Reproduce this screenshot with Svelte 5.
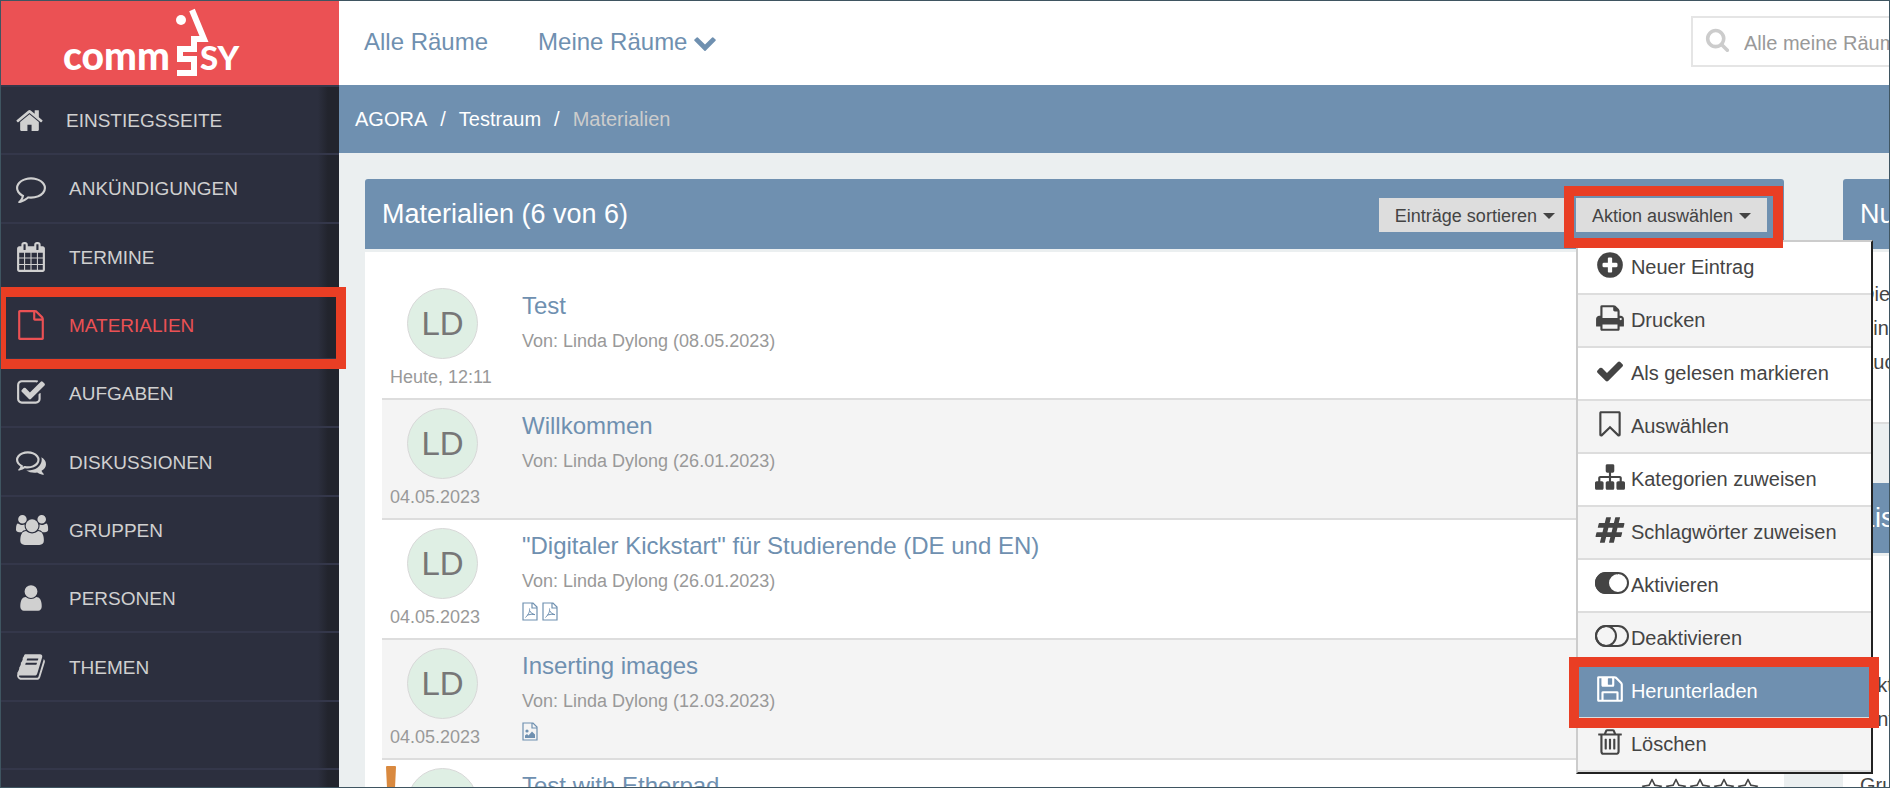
<script>
  const paths = {
    home: 'M1472 992v480q0 26-19 45t-45 19h-384v-384h-256v384h-384q-26 0-45-19t-19-45v-480q0-1 .5-3t.5-3l575-474 575 474q1 2 1 6zm223-69l-62 74q-8 9-21 11h-3q-13 0-21-7l-692-577-692 577q-12 8-24 7-13-2-21-11l-62-74q-8-10-7-23.5t11-21.5l719-599q32-26 76-26t76 26l244 204v-195q0-14 9-23t23-9h192q14 0 23 9t9 23v408l219 182q10 8 11 21.5t-7 23.5z',
    comment: 'M896 384q-204 0-381.5 69.5t-282 187.5-104.5 255q0 112 71.5 213.5t201.5 175.5l87 50-27 96q-24 91-70 172 152-63 275-171l43-38 57 6q69 8 130 8 204 0 381.5-69.5t282-187.5 104.5-255-104.5-255-282-187.5-381.5-69.5zm896 512q0 174-120 321.5t-326 233-450 85.5q-70 0-145-8-198 175-460 242-49 14-114 22h-5q-15 0-27-10.5t-16-27.5v-1q-3-4-.5-12t2-10 4.5-9.5l6-9 7-8.5 8-9q7-8 31-34.5t34.5-38 31-39.5 32.5-51 27-59 26-76q-157-89-247.5-220t-90.5-281q0-130 71-248.5t191-204.5 286-136.5 348-50.5 348 50.5 286 136.5 191 204.5 71 248.5z',
    calendar: 'M192 1664h288v-288h-288v288zm352 0h320v-288h-320v288zm-352-352h288v-320h-288v320zm352 0h320v-320h-320v320zm-352-384h288v-288h-288v288zm736 736h320v-288h-320v288zm-384-736h320v-288h-320v288zm768 736h288v-288h-288v288zm-384-352h320v-320h-320v320zm-352-864v-288q0-13-9.5-22.5t-22.5-9.5h-64q-13 0-22.5 9.5t-9.5 22.5v288q0 13 9.5 22.5t22.5 9.5h64q13 0 22.5-9.5t9.5-22.5zm736 864h288v-320h-288v320zm-384-384h320v-288h-320v288zm384 0h288v-288h-288v288zm32-480v-288q0-13-9.5-22.5t-22.5-9.5h-64q-13 0-22.5 9.5t-9.5 22.5v288q0 13 9.5 22.5t22.5 9.5h64q13 0 22.5-9.5t9.5-22.5zm384-64v1280q0 52-38 90t-90 38h-1408q-52 0-90-38t-38-90v-1280q0-52 38-90t90-38h128v-96q0-66 47-113t113-47h64q66 0 113 47t47 113v96h384v-96q0-66 47-113t113-47h64q66 0 113 47t47 113v96h128q52 0 90 38t38 90z',
    file: 'M1596 380q28 28 48 76t20 88v1152q0 40-28 68t-68 28h-1344q-40 0-68-28t-28-68v-1600q0-40 28-68t68-28h896q40 0 88 20t76 48zm-444-244v376h376q-10-29-22-41l-313-313q-12-12-41-22zm384 1528v-1024h-416q-40 0-68-28t-28-68v-416h-768v1536h1280z',
    tasks: 'M1472 930v318q0 119-84.5 203.5t-203.5 84.5h-832q-119 0-203.5-84.5t-84.5-203.5v-832q0-119 84.5-203.5t203.5-84.5h832q63 0 117 25 15 7 18 23 3 17-9 29l-49 49q-10 10-23 10-3 0-9-2-23-6-45-6h-832q-66 0-113 47t-47 113v832q0 66 47 113t113 47h832q66 0 113-47t47-113v-254q0-13 9-22l64-64q10-10 23-10 6 0 12 3 20 8 20 29zm231-489l-814 814q-24 24-57 24t-57-24l-430-430q-24-24-24-57t24-57l110-110q24-24 57-24t57 24l263 263 647-647q24-24 57-24t57 24l110 110q24 24 24 57t-24 57z',
    comments: 'M704 384q-153 0-286 52t-211.5 141-78.5 191q0 82 53 158t149 132l97 56-35 84q34-20 62-39l44-31 53 10q78 14 153 14 153 0 286-52t211.5-141 78.5-191-78.5-191-211.5-141-286-52zm0-128q191 0 353.5 68.5t256.5 186.5 94 257-94 257-256.5 186.5-353.5 68.5q-86 0-176-16-124 88-278 128-36 9-86 16h-3q-11 0-20.5-8t-11.5-21q-1-3-1-6.5t.5-6.5 2-6l2.5-5 3.5-5.5 4-5 4.5-5 4-4.5q5-6 23-25t26-29.5 22.5-29 25-38.5 20.5-44q-124-72-195-177t-71-224q0-139 94-257t256.5-186.5 353.5-68.5zm822 1169q10 24 20.5 44t25 38.5 22.5 29 26 29.5 23 25q1 1 4 4.5t4.5 5 4 5 3.5 5.5l2.5 5 2 6 .5 6.5-1 6.5q-3 14-13 22t-22 7q-50-7-86-16-154-40-278-128-90 16-176 16-271 0-472-132 58 4 88 4 161 0 309-45t264-129q125-92 192-212t67-254q0-77-23-152 129 71 204 178t75 230q0 120-71 224.5t-195 176.5z',
    users: 'M593 896q-162 5-265 128h-134q-82 0-138-40.5t-56-118.5q0-353 124-353 6 0 43.5 21t97.5 42.5 119 21.5q67 0 133-23-5 37-5 66 0 139 81 256zm1071 637q0 120-73 189.5t-194 69.5h-874q-121 0-194-69.5t-73-189.5q0-53 3.5-103.5t14-109 26.5-108.5 43-97.5 62-81 85.5-53.5 111.5-20q10 0 43 21.5t73 48 107 48 135 21.5 135-21.5 107-48 73-48 43-21.5q61 0 111.5 20t85.5 53.5 62 81 43 97.5 26.5 108.5 14 109 3.5 103.5zm-1024-1277q0 106-75 181t-181 75-181-75-75-181 75-181 181-75 181 75 75 181zm704 384q0 159-112.5 271.5t-271.5 112.5-271.5-112.5-112.5-271.5 112.5-271.5 271.5-112.5 271.5 112.5 112.5 271.5zm576 225q0 78-56 118.5t-138 40.5h-134q-103-123-265-128 81-117 81-256 0-29-5-66 66 23 133 23 59 0 119-21.5t97.5-42.5 43.5-21q124 0 124 353zm-128-609q0 106-75 181t-181 75-181-75-75-181 75-181 181-75 181 75 75 181z',
    user: 'M1536 1399q0 109-62.5 187t-150.5 78h-854q-88 0-150.5-78t-62.5-187q0-85 8.5-160.5t31.5-152 58.5-131 94-89 134.5-34.5q131 128 313 128t313-128q76 0 134.5 34.5t94 89 58.5 131 31.5 152 8.5 160.5zm-256-887q0 159-112.5 271.5t-271.5 112.5-271.5-112.5-112.5-271.5 112.5-271.5 271.5-112.5 271.5 112.5 112.5 271.5z',
    book: 'M1703 478q40 57 18 129l-275 906q-19 64-76.5 107.5t-122.5 43.5h-923q-77 0-148.5-53.5t-99.5-131.5q-24-67-2-127 0-4 3-27t4-37q1-8-3-21.5t-3-19.5q2-11 8-21t16.5-23.5 16.5-23.5q23-38 45-91.5t30-91.5q3-10 .5-30t-.5-28q3-11 17-28t17-23q21-36 42-92t25-90q1-9-2.5-32t.5-28q4-13 22-30.5t22-22.5q19-26 42.5-84.5t27.5-96.5q1-8-3-25.5t-2-26.5q2-8 9-18t18-23 17-21q8-12 16.5-30.5t15-35 16-36 19.5-32 26.5-23.5 36-11.5 47.5 5.5l-1 3q38-9 51-9h761q74 0 114 56t18 130l-274 906q-36 119-71.5 153.5t-128.5 34.5h-869q-27 0-38 15-11 16-1 43 24 70 144 70h923q29 0 56-15.5t35-41.5l300-987q7-22 5-57 38 15 59 43zm-1064 2q-4 13 2 22.5t20 9.5h608q13 0 25.5-9.5t16.5-22.5l21-64q4-13-2-22.5t-20-9.5h-608q-13 0-25.5 9.5t-16.5 22.5zm-83 256q-4 13 2 22.5t20 9.5h608q13 0 25.5-9.5t16.5-22.5l21-64q4-13-2-22.5t-20-9.5h-608q-13 0-25.5 9.5t-16.5 22.5z',
    plus: 'M1344 960v-128q0-26-19-45t-45-19h-256v-256q0-26-19-45t-45-19h-128q-26 0-45 19t-19 45v256h-256q-26 0-45 19t-19 45v128q0 26 19 45t45 19h256v256q0 26 19 45t45 19h128q26 0 45-19t19-45v-256h256q26 0 45-19t19-45zm320-64q0 209-103 385.5t-279.5 279.5-385.5 103-385.5-103-279.5-279.5-103-385.5 103-385.5 279.5-279.5 385.5-103 385.5 103 279.5 279.5 103 385.5z',
    print: 'M448 1536h896v-256h-896v256zm0-640h896v-384h-160q-40 0-68-28t-28-68v-160h-640v640zm1152 64q0-26-19-45t-45-19-45 19-19 45 19 45 45 19 45-19 19-45zm128 0v416q0 13-9.5 22.5t-22.5 9.5h-224v160q0 40-28 68t-68 28h-960q-40 0-68-28t-28-68v-160h-224q-13 0-22.5-9.5t-9.5-22.5v-416q0-79 56.5-135.5t135.5-56.5h64v-544q0-40 28-68t68-28h672q40 0 88 20t76 48l152 152q28 28 48 76t20 88v256h64q79 0 135.5 56.5t56.5 135.5z',
    check: 'M1671 566q0 40-28 68l-724 724-136 136q-28 28-68 28t-68-28l-136-136-362-362q-28-28-28-68t28-68l136-136q28-28 68-28t68 28l294 295 656-657q28-28 68-28t68 28l136 136q28 28 28 68z',
    bookmark: 'M1408 256h-1024v1242l423-406 89-85 89 85 423 406v-1242zm12-128q23 0 44 9 33 13 52.5 41t19.5 62v1289q0 34-19.5 62t-52.5 41q-19 8-44 8-48 0-83-32l-441-424-441 424q-36 33-83 33-23 0-44-9-33-13-52.5-41t-19.5-62v-1289q0-34 19.5-62t52.5-41q21-9 44-9h1048z',
    sitemap: 'M1792 1248v320q0 40-28 68t-68 28h-320q-40 0-68-28t-28-68v-320q0-40 28-68t68-28h96v-192h-512v192h96q40 0 68 28t28 68v320q0 40-28 68t-68 28h-320q-40 0-68-28t-28-68v-320q0-40 28-68t68-28h96v-192h-512v192h96q40 0 68 28t28 68v320q0 40-28 68t-68 28h-320q-40 0-68-28t-28-68v-320q0-40 28-68t68-28h96v-192q0-52 38-90t90-38h512v-192h-96q-40 0-68-28t-28-68v-320q0-40 28-68t68-28h320q40 0 68 28t28 68v320q0 40-28 68t-68 28h-96v192h512q52 0 90 38t38 90v192h96q40 0 68 28t28 68z',
    hashtag: 'M991 1024l64-256h-254l-64 256h254zm768-504l-56 224q-7 24-31 24h-327l-64 256h311q15 0 25 12 10 14 6 28l-56 224q-5 24-31 24h-327l-81 328q-7 24-31 24h-224q-16 0-26-12-9-12-6-28l78-312h-254l-81 328q-7 24-31 24h-225q-15 0-25-12-9-12-6-28l78-312h-311q-15 0-25-12-9-12-6-28l56-224q7-24 31-24h327l64-256h-311q-15 0-25-12-10-14-6-28l56-224q5-24 31-24h327l81-328q7-24 32-24h224q15 0 25 12 9 12 6 28l-78 312h254l81-328q7-24 32-24h224q15 0 25 12 9 12 6 28l-78 312h311q15 0 25 12 9 12 6 28z',
    save: 'M512 1536h768v-384h-768v384zm896 0h128v-896q0-14-10-38.5t-20-34.5l-281-281q-10-10-34-20t-39-10v416q0 40-28 68t-68 28h-576q-40 0-68-28t-28-68v-416h-128v1280h128v-416q0-40 28-68t68-28h832q40 0 68 28t28 68v416zm-384-928v-320q0-13-9.5-22.5t-22.5-9.5h-192q-13 0-22.5 9.5t-9.5 22.5v320q0 13 9.5 22.5t22.5 9.5h192q13 0 22.5-9.5t9.5-22.5zm640 32v928q0 40-28 68t-68 28h-1344q-40 0-68-28t-28-68v-1344q0-40 28-68t68-28h928q40 0 88 20t76 48l280 280q28 28 48 76t20 88z',
    trash: 'M704 736v576q0 14-9 23t-23 9h-64q-14 0-23-9t-9-23v-576q0-14 9-23t23-9h64q14 0 23 9t9 23zm256 0v576q0 14-9 23t-23 9h-64q-14 0-23-9t-9-23v-576q0-14 9-23t23-9h64q14 0 23 9t9 23zm256 0v576q0 14-9 23t-23 9h-64q-14 0-23-9t-9-23v-576q0-14 9-23t23-9h64q14 0 23 9t9 23zm128 724v-948h-896v948q0 22 7 40.5t14.5 27 10.5 8.5h832q3 0 10.5-8.5t14.5-27 7-40.5zm-672-1076h448l-48-117q-7-9-17-11h-317q-10 2-17 11zm928 32v64q0 14-9 23t-23 9h-96v948q0 83-47 143.5t-113 60.5h-832q-66 0-113-58.5t-47-141.5v-952h-96q-14 0-23-9t-9-23v-64q0-14 9-23t23-9h309l70-167q15-37 54-63t79-26h320q40 0 79 26t54 63l70 167h309q14 0 23 9t9 23z',
    star: 'M1201 1004l306-297-422-62-189-382-189 382-422 62 306 297-73 421 378-199 377 199zm527-357q0 22-26 48l-363 354 86 500q1 7 1 20 0 50-41 50-19 0-40-12l-449-236-449 236q-22 12-40 12-21 0-31.5-14.5t-10.5-35.5q0-6 2-20l86-500-364-354q-25-27-25-48 0-37 56-46l502-73 225-455q19-41 49-41t49 41l225 455 502 73q56 9 56 46z',
    chevron: 'M1683 808l-742 741q-19 19-45 19t-45-19l-742-741q-19-19-19-45.5t19-45.5l166-165q19-19 45-19t45 19l531 531 531-531q19-19 45-19t45 19l166 165q19 19 19 45.5t-19 45.5z',
    search: 'M1216 832q0-185-131.5-316.5t-316.5-131.5-316.5 131.5-131.5 316.5 131.5 316.5 316.5 131.5 316.5-131.5 131.5-316.5zm512 832q0 52-38 90t-90 38q-54 0-90-38l-343-342q-179 124-399 124-143 0-273.5-55.5t-225-150-150-225-55.5-273.5 55.5-273.5 150-225 225-150 273.5-55.5 273.5 55.5 225 150 150 225 55.5 273.5q0 220-124 399l343 343q37 37 37 90z'
  };

  const rubrics = [
    { icon: 'home', label: 'EINSTIEGSSEITE', box: '64 0 1664 1792', width: 27 },
    { icon: 'comment', label: 'ANKÜNDIGUNGEN' },
    { icon: 'calendar', label: 'TERMINE' },
    { icon: 'file', label: 'MATERIALIEN', active: true },
    { icon: 'tasks', label: 'AUFGABEN' },
    { icon: 'comments', label: 'DISKUSSIONEN' },
    { icon: 'users', label: 'GRUPPEN' },
    { icon: 'user', label: 'PERSONEN' },
    { icon: 'book', label: 'THEMEN' }
  ];

  const actions = [
    { icon: 'plus', label: 'Neuer Eintrag' },
    { icon: 'print', label: 'Drucken' },
    { icon: 'check', label: 'Als gelesen markieren' },
    { icon: 'bookmark', label: 'Auswählen' },
    { icon: 'sitemap', label: 'Kategorien zuweisen' },
    { icon: 'hashtag', label: 'Schlagwörter zuweisen' },
    { icon: 'on', label: 'Aktivieren' },
    { icon: 'off', label: 'Deaktivieren' },
    { icon: 'save', label: 'Herunterladen', active: true },
    { icon: 'trash', label: 'Löschen' }
  ];

  const entries = [
    { title: 'Test', created: '08.05.2023', changed: 'Heute, 12:11', files: [] },
    { title: 'Willkommen', created: '26.01.2023', changed: '04.05.2023', files: [] },
    { title: '"Digitaler Kickstart" für Studierende (DE und EN)', created: '26.01.2023', changed: '04.05.2023', files: ['pdf', 'pdf'] },
    { title: 'Inserting images', created: '12.03.2023', changed: '04.05.2023', files: ['image'] },
    { title: 'Test with Etherpad', created: '', changed: '', files: [], alert: true, rated: true }
  ];
</script>

{#snippet glyph(name, box = '0 0 1792 1792', width = 30)}
  <svg class="glyph" viewBox={box} style="width: {width}px" aria-hidden="true"><path d={paths[name]} /></svg>
{/snippet}

<div class="page">
  <aside class="sidebar">
    <a class="logo" href="#start" aria-label="CommSy">
      <svg viewBox="0 0 190 84" aria-hidden="true">
        <text x="3" y="69" class="mark">comm</text>
        <text x="140" y="69" class="mark caps">SY</text>
        <circle cx="121" cy="19" r="5" />
        <path d="M132 9 144 38H134V48H120V58H134V72H117" fill="none" stroke="#fff" stroke-width="6" />
      </svg>
    </a>
    <nav class="rubrics">
      {#each rubrics as r}
        <a href="#{r.icon}" class="rubric" class:active={r.active}>
          {@render glyph(r.icon, r.box, r.width)}
          <span>{r.label}</span>
        </a>
      {/each}
      <div class="rubric"></div>
    </nav>
  </aside>

  <main>
    <header class="topbar">
      <nav class="rooms">
        <a href="#all">Alle Räume</a>
        <a href="#mine">Meine Räume {@render glyph('chevron', '0 0 1792 1792', 24)}</a>
      </nav>
      <label class="search">
        {@render glyph('search', '0 0 1792 1792', 25)}
        <input type="search" placeholder="Alle meine Räume" aria-label="Suche" />
      </label>
    </header>

    <nav class="crumbs">
      <a href="#agora">AGORA</a><span>/</span><a href="#room">Testraum</a><span>/</span><span class="here">Materialien</span>
    </nav>

    <div class="content">
      <section class="panel">
        <div class="panel-head">
          <h1>Materialien (6 von 6)</h1>
          <div class="tools">
            <button class="drop">Einträge sortieren <i class="caret"></i></button>
            <div class="anchor">
              <button class="drop" aria-expanded="true">Aktion auswählen <i class="caret"></i></button>
              <ul class="menu">
                {#each actions as a}
                  <li class:active={a.active}>
                    <button>
                      {#if a.icon === 'on'}
                        <svg class="glyph toggle" viewBox="0 0 34 22" aria-hidden="true">
                          <rect x="1" y="1" width="32" height="20" rx="10" fill="#fff" stroke="currentColor" stroke-width="2" />
                          <path fill-rule="evenodd" d="M11 0H23V22H11A11 11 0 0 1 11 0ZM23 2A9 9 0 0 0 23 20Z" />
                        </svg>
                      {:else if a.icon === 'off'}
                        <svg class="glyph toggle" viewBox="0 0 34 22" aria-hidden="true">
                          <rect x="1" y="1" width="32" height="20" rx="10" fill="none" stroke="currentColor" stroke-width="2" />
                          <circle cx="11" cy="11" r="10" fill="none" stroke="currentColor" stroke-width="2" />
                        </svg>
                      {:else}
                        {@render glyph(a.icon)}
                      {/if}
                      <span>{a.label}</span>
                    </button>
                  </li>
                {/each}
              </ul>
            </div>
          </div>
        </div>
        <div class="panel-body">
          {#each entries as e}
            <article class="entry">
              {#if e.alert}
                <svg class="alert" viewBox="0 0 10 32" aria-hidden="true"><path d="M0 1Q0 0 1 0H9Q10 0 10 1L9 22H1Z M2 25H8V31H2Z" /></svg>
              {/if}
              <div class="who">
                <div class="avatar">LD</div>
                <div class="date">{e.changed}</div>
              </div>
              <div class="what">
                <a class="title" href="#entry">{e.title}</a>
                {#if e.created}<div class="by">Von: Linda Dylong ({e.created})</div>{/if}
                <div class="files">
                  {#each e.files as f}
                    <svg viewBox="0 0 16 19" aria-hidden="true">
                      <path d="M1 1H11L15 5V18H1Z M10 1V6H15" fill="none" stroke="currentColor" stroke-width="1.2" />
                      {#if f === 'pdf'}
                        <path d="M7.5 6.5C8 9 7 12 3.5 15.5M7.5 8.5Q9 12 13 12.8M5.5 13Q9 11.8 13 12.5" fill="none" stroke="currentColor" />
                      {:else}
                        <circle cx="5" cy="9" r="1.6" /><path d="M3 16V13.500L5 12L6.500 13.500L10 9.500L13 12.500V16Z" />
                      {/if}
                    </svg>
                  {/each}
                </div>
              </div>
              {#if e.rated}
                <div class="stars">
                  {#each Array(5) as _}{@render glyph('star', '0 0 1792 1792', 22)}{/each}
                </div>
              {/if}
            </article>
          {/each}
        </div>
      </section>

      <div class="side">
        <section class="panel">
          <div class="panel-head"><h2>Nutzer</h2></div>
          <div class="panel-body note">Die<br />Ein<br />Auch</div>
        </section>
        <section class="panel">
          <div class="panel-head"><h2>Liste</h2></div>
          <div class="panel-body list">
            <ul><li>Akt</li><li>Ent</li></ul>
            <p>Gruppen</p>
          </div>
        </section>
      </div>
    </div>
  </main>
</div>

<style>
  :global(body) { margin: 0; }
  * { box-sizing: border-box; }
  .page {
    display: flex;
    height: 100vh;
    overflow: hidden;
    position: relative;
    background: #ebeff0;
    color: #444;
    font: 20px "Liberation Sans", Arial, sans-serif;
  }
  .page::after {
    content: "";
    position: absolute;
    inset: 0;
    border: 1px solid #3f5561;
    pointer-events: none;
    z-index: 9;
  }
  a { color: inherit; text-decoration: none; }
  ul { list-style: none; margin: 0; padding: 0; }
  button { font: inherit; color: inherit; border: 0; cursor: pointer; }
  .glyph { flex: none; fill: currentColor; overflow: visible; }

  .sidebar {
    flex: 0 0 339px;
    display: flex;
    flex-direction: column;
    position: relative;
    z-index: 3;
    background: linear-gradient(to right, #2c2f3e 318px, #22242d 328px);
    color: #d0d0d0;
  }
  .logo { display: flex; justify-content: center; height: 85px; padding: 1px 29px 0 0; background: #eb5154; }
  .logo svg { width: 190px; height: 84px; fill: #fff; }
  .mark { font: 900 39px Lato, sans-serif; }
  .caps { font-size: 33px; }
  .rubrics { flex: 1; display: flex; flex-direction: column; border-top: 2px solid #34374a; padding-bottom: 18px; }
  .rubric {
    flex: 1;
    display: flex;
    align-items: center;
    gap: 23px;
    padding-left: 16px;
    border-bottom: 2px solid #34374a;
    position: relative;
    font-size: 19px;
  }
  .rubric span { padding-top: 2px; }
  .rubric.active { color: #eb5154; }
  .rubric.active::after {
    content: "";
    position: absolute;
    inset: -5px -7px -11px 0;
    border: 10px solid #e93e24;
    border-left-width: 6px;
  }

  main { flex: 1; min-width: 0; display: flex; flex-direction: column; }
  .topbar { flex: none; display: flex; justify-content: space-between; height: 85px; background: #fff; }
  .rooms { display: flex; align-items: center; gap: 50px; padding: 0 0 2px 25px; color: #6f90b0; font-size: 24px; }
  .rooms a { display: flex; align-items: center; gap: 6px; }
  .search {
    display: flex;
    align-items: center;
    gap: 14px;
    width: 340px;
    height: 51px;
    margin: 16px -141px 0 0;
    padding: 0 12px;
    border: 2px solid #e5e5e5;
    color: #ccc;
  }
  .search .glyph { margin-bottom: 4px; }
  .search input { flex: 1; min-width: 0; border: 0; padding: 3px 0 0; background: none; font: inherit; outline: 0; }
  .search input::placeholder { color: #999; opacity: 1; }
  .crumbs { flex: none; display: flex; align-items: center; gap: 13px; height: 68px; padding: 0 16px; background: #6f90b0; color: #fff; }
  .here { color: #ccc; }

  .content {
    display: grid;
    grid-template-columns: minmax(0, 1fr) 300px;
    gap: 59px;
    margin-right: -253px;
    padding: 26px 0 0 26px;
  }
  .panel-head {
    display: flex;
    align-items: center;
    justify-content: space-between;
    height: 70px;
    padding: 0 17px;
    border-radius: 3px 3px 0 0;
    background: #6f90b0;
    color: #fff;
  }
  h1, h2 { margin: 0; font-size: 27px; font-weight: 400; }
  .panel-body { margin-top: 3px; padding: 28px 17px 0; background: #fff; }
  .tools { display: flex; gap: 5px; padding-top: 2px; font-size: 18px; }
  .anchor { position: relative; z-index: 4; }
  .drop { display: flex; align-items: center; gap: 6px; height: 34px; padding: 2px 16px 0; background: #ddd; color: #444; }
  .caret { border: 6px solid transparent; border-top-color: #444; border-bottom: 0; }
  .anchor::after {
    content: "";
    position: absolute;
    inset: -12px -16px -16px -12px;
    border: 10px solid #e93e24;
    pointer-events: none;
  }
  .menu {
    position: absolute;
    top: 42px;
    left: 0;
    width: 297px;
    border: 2px solid #222;
    border-top-color: #ccc;
    border-left-color: #ccc;
    background: #fff;
    color: #444;
    font-size: 20px;
  }
  .menu li { position: relative; border-bottom: 2px solid #ddd; }
  .menu li:nth-child(even) { background: #f4f4f4; }
  .menu button { display: flex; align-items: center; gap: 6px; width: 100%; height: 51px; padding: 0 0 0 17px; background: none; }
  .menu .glyph { margin-bottom: 5px; }
  .menu .toggle { width: 34px; margin-right: -4px; }
  .menu li.active { background: #6f90b0; color: #fff; }
  .menu .active::after {
    content: "";
    position: absolute;
    z-index: 1;
    inset: -9px -8px -11px -9px;
    border: 10px solid #e93e24;
  }

  .entry { display: flex; position: relative; height: 120px; padding: 8px; border-bottom: 2px solid #ddd; }
  .entry:nth-child(even) { background: #f4f4f4; }
  .who { flex: 0 0 132px; color: #999; font-size: 18px; }
  .avatar {
    display: grid;
    place-items: center;
    width: 71px;
    height: 71px;
    margin: 0 0 5px 17px;
    border: 1px solid #d8d8d8;
    border-radius: 50%;
    background: #dfefe4;
    color: #777;
    font-size: 33px;
  }
  .date, .by { line-height: 26px; }
  .what { flex: 1; }
  .title { display: block; margin: 2px 0 6px; line-height: 32px; font-size: 24px; color: #6f90b0; }
  .by { color: #999; font-size: 18px; }
  .files { display: flex; gap: 4px; padding-top: 8px; color: #6f90b0; }
  .files svg { width: 16px; height: 19px; fill: currentColor; }
  .alert { position: absolute; left: 4px; top: 6px; width: 10px; height: 32px; fill: #d9893f; }
  .stars { display: flex; gap: 2px; align-items: flex-start; padding-top: 10px; }

  .side .panel-body { white-space: nowrap; }
  .side .note { height: 172px; padding-top: 25px; line-height: 34px; border-bottom: 2px solid #ddd; }
  .side .panel + .panel { margin-top: 59px; }
  .side .list { padding-top: 112px; height: 300px; line-height: 34px; }
  .list li { padding-left: 4px; }
  .list p { margin: 32px 0 0; }
</style>
